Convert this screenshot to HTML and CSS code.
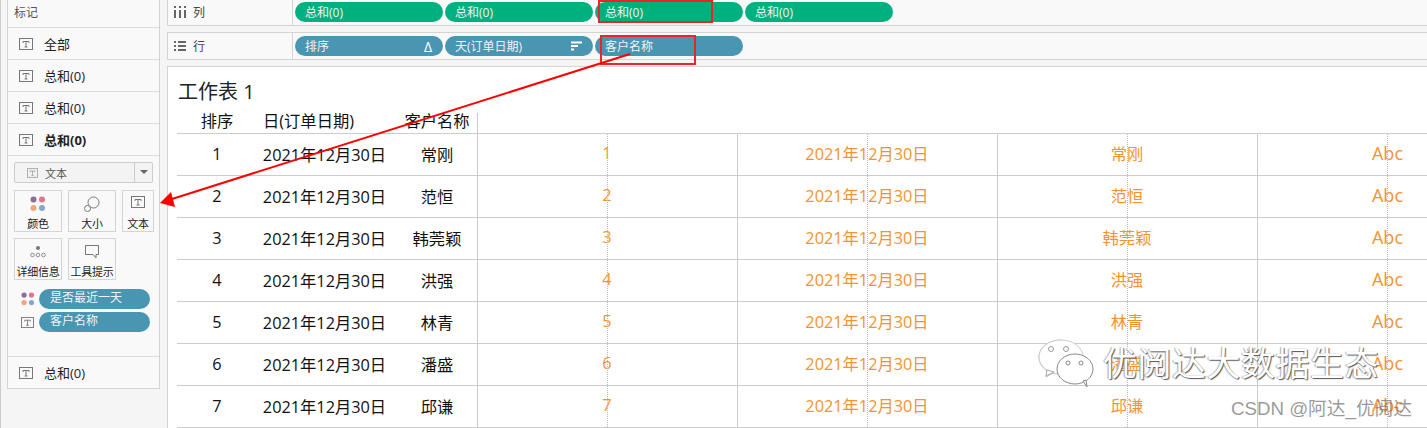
FILE: index.html
```html
<!DOCTYPE html>
<html lang="en">
<head>
    <meta charset="UTF-8">
    <title>工作表 1</title>
    <link rel="stylesheet" href="styles.css">
</head>
<body>
    <svg class="defs" width="0" height="0">
        <symbol id="t-icon" viewBox="0 0 14 12">
            <rect x="0.5" y="0.5" width="13" height="11" fill="none" stroke="#777"/>
            <path d="M4 3.5h6v1.5M4 3.5v1.5M7 3.5v5.5M5.5 9h3" fill="none" stroke="#777"/>
        </symbol>
        <symbol id="dots-icon" viewBox="0 0 16 16">
            <circle cx="3.5" cy="3.5" r="3" fill="#8a6f9b"/>
            <circle cx="12" cy="3.5" r="3" fill="#ea7288"/>
            <circle cx="3.5" cy="12" r="3" fill="#f3a67c"/>
            <circle cx="12" cy="12" r="3" fill="#86a6cc"/>
        </symbol>
    </svg>

    <aside class="marks">
        <div class="marks-title">标记</div>
        <div class="mark-row"><svg class="t"><use href="#t-icon"/></svg>全部</div>
        <div class="mark-row"><svg class="t"><use href="#t-icon"/></svg>总和(0)</div>
        <div class="mark-row"><svg class="t"><use href="#t-icon"/></svg>总和(0)</div>
        <div class="mark-row bold"><svg class="t"><use href="#t-icon"/></svg>总和(0)</div>
        <div class="mark-card">
            <div class="select">
                <span class="select-label"><svg class="t small"><use href="#t-icon"/></svg>文本</span>
                <span class="select-arrow"></span>
            </div>
            <div class="mark-btns">
                <div class="mark-btn">
                    <svg class="btn-icon" viewBox="0 0 16 16" width="16" height="16"><use href="#dots-icon"/></svg>
                    颜色
                </div>
                <div class="mark-btn">
                    <svg class="btn-icon" viewBox="0 0 16 16" width="16" height="16">
                        <circle cx="9.5" cy="6.5" r="5.5" fill="none" stroke="#777"/>
                        <circle cx="3.5" cy="12.5" r="3" fill="#f9f9f9" stroke="#777"/>
                    </svg>
                    大小
                </div>
                <div class="mark-btn narrow">
                    <svg class="t btn-icon"><use href="#t-icon"/></svg>
                    文本
                </div>
                <div class="mark-btn">
                    <svg class="btn-icon" viewBox="0 0 16 16" width="16" height="16">
                        <circle cx="8" cy="4" r="2" fill="#777"/>
                        <circle cx="2.5" cy="11" r="1.8" fill="none" stroke="#777" stroke-width="0.8"/>
                        <circle cx="8" cy="11" r="1.8" fill="none" stroke="#777" stroke-width="0.8"/>
                        <circle cx="13.5" cy="11" r="1.8" fill="none" stroke="#777" stroke-width="0.8"/>
                    </svg>
                    详细信息
                </div>
                <div class="mark-btn">
                    <svg class="btn-icon" viewBox="0 0 16 16" width="16" height="16">
                        <path d="M1.5 1.5h13v9h-2.5v3.5l-3-3.5h-7.5z" fill="none" stroke="#777"/>
                    </svg>
                    工具提示
                </div>
            </div>
            <div class="field-row">
                <svg class="dots"><use href="#dots-icon"/></svg>
                <span class="field">是否最近一天</span>
            </div>
            <div class="field-row">
                <svg class="t field-t"><use href="#t-icon"/></svg>
                <span class="field">客户名称</span>
            </div>
        </div>
        <div class="mark-row last"><svg class="t"><use href="#t-icon"/></svg>总和(0)</div>
    </aside>

    <main class="main">
        <div class="shelf shelf-cols">
            <div class="shelf-label">
                <svg class="shelf-icon" width="12" height="12" viewBox="0 0 12 12">
                    <path d="M1 0v2M1 4v8M6 0v2M6 4v8M11 0v2M11 4v8" stroke="#666" stroke-width="2"/>
                </svg>
                列
            </div>
            <div class="pills">
                <span class="pill green">总和(0)</span>
                <span class="pill green">总和(0)</span>
                <span class="pill green">总和(0)</span>
                <span class="pill green">总和(0)</span>
            </div>
        </div>
        <div class="shelf shelf-rows">
            <div class="shelf-label">
                <svg class="shelf-icon" width="12" height="12" viewBox="0 0 12 12">
                    <path d="M0 2h2M4 2h8M0 6h2M4 6h8M0 10h2M4 10h8" stroke="#666" stroke-width="2"/>
                </svg>
                行
            </div>
            <div class="pills">
                <span class="pill blue">排序<span class="delta">Δ</span></span>
                <span class="pill blue">天(订单日期)
                    <svg class="sort" width="11" height="10" viewBox="0 0 11 10">
                        <path d="M0 1.5h11M0 5h7M0 8.5h3" stroke="#fff" stroke-width="2"/>
                    </svg>
                </span>
                <span class="pill blue">客户名称</span>
            </div>
        </div>

        <section class="sheet">
            <h1 class="sheet-title">工作表 1</h1>
            <div class="grid">
                <div class="head">排序</div>
                <div class="head date-head">日(订单日期)</div>
                <div class="head name">客户名称</div>
                <div class="head last-head"></div>

                <div class="cell">1</div><div class="cell">2021年12月30日</div><div class="cell name">常刚</div>
                <div class="cell v">1</div><div class="cell v">2021年12月30日</div><div class="cell v">常刚</div><div class="cell v edge">Abc</div>

                <div class="cell">2</div><div class="cell">2021年12月30日</div><div class="cell name">范恒</div>
                <div class="cell v">2</div><div class="cell v">2021年12月30日</div><div class="cell v">范恒</div><div class="cell v edge">Abc</div>

                <div class="cell">3</div><div class="cell">2021年12月30日</div><div class="cell name">韩莞颖</div>
                <div class="cell v">3</div><div class="cell v">2021年12月30日</div><div class="cell v">韩莞颖</div><div class="cell v edge">Abc</div>

                <div class="cell">4</div><div class="cell">2021年12月30日</div><div class="cell name">洪强</div>
                <div class="cell v">4</div><div class="cell v">2021年12月30日</div><div class="cell v">洪强</div><div class="cell v edge">Abc</div>

                <div class="cell">5</div><div class="cell">2021年12月30日</div><div class="cell name">林青</div>
                <div class="cell v">5</div><div class="cell v">2021年12月30日</div><div class="cell v">林青</div><div class="cell v edge">Abc</div>

                <div class="cell">6</div><div class="cell">2021年12月30日</div><div class="cell name">潘盛</div>
                <div class="cell v">6</div><div class="cell v">2021年12月30日</div><div class="cell v">潘盛</div><div class="cell v edge">Abc</div>

                <div class="cell">7</div><div class="cell">2021年12月30日</div><div class="cell name">邱谦</div>
                <div class="cell v">7</div><div class="cell v">2021年12月30日</div><div class="cell v">邱谦</div><div class="cell v edge">Abc</div>
            </div>
        </section>
    </main>

    <!-- annotations drawn on top of the screenshot -->
    <svg class="notes" width="1427" height="428" viewBox="0 0 1427 428">
        <rect x="599" y="1" width="113" height="21" fill="none" stroke="#e8262a" stroke-width="2"/>
        <rect x="601" y="36" width="94" height="28" fill="none" stroke="#e8262a" stroke-width="2"/>
        <path d="M630 54L172 199" stroke="#f00" stroke-width="2" fill="none"/>
        <path d="M160 203L171 192L175 207z" fill="#f00"/>
    </svg>

    <div class="wechat">
        <svg width="58" height="50" viewBox="0 0 58 50">
            <path d="M24 2C12 2 2 9 2 19c0 6 3 10 8 14l-1 6 7-4c3 1 5 1 8 1" fill="#fff" stroke="#bbb"/>
            <ellipse cx="24" cy="19" rx="22" ry="17" fill="#fff" stroke="#ccc"/>
            <path d="M10 32l-1 6 8-4z" fill="#fff" stroke="#aaa"/>
            <circle cx="14" cy="11" r="2.5" fill="#fff" stroke="#999"/>
            <circle cx="29" cy="11" r="2.5" fill="#fff" stroke="#999"/>
            <ellipse cx="38" cy="31" rx="18" ry="15" fill="#fff" stroke="#888"/>
            <path d="M46 43l4 6-1-7z" fill="#fff" stroke="#888"/>
            <circle cx="31" cy="25" r="2" fill="#fff" stroke="#888"/>
            <circle cx="44" cy="25" r="2" fill="#fff" stroke="#888"/>
        </svg>
        <span class="wechat-name">优阅达大数据生态</span>
    </div>
    <div class="csdn">CSDN @阿达_优阅达</div>
</body>
</html>
```
FILE: styles.css
```css
* {
    box-sizing: border-box;
}

body {
    margin: 0;
    height: 100vh;
    display: flex;
    overflow: hidden;
    position: relative;
    font-family: "Open Sans", "Noto Sans CJK SC", sans-serif;
    font-size: 13px;
    color: #222;
    background: #f5f5f5;
    border-left: 1px solid #ccc;
}

.defs {
    position: absolute;
}

.t {
    width: 14px;
    height: 12px;
    flex: none;
}

/* marks card on the left */
.marks {
    width: 153px;
    height: 389px;
    margin-left: 6px;
    flex: none;
    background: #f9f9f9;
    border: 1px solid #d4d4d4;
    border-top: 0;
}

.marks-title {
    height: 28px;
    line-height: 26px;
    padding-left: 6px;
    font-size: 12px;
    color: #555;
    border-bottom: 1px solid #dcdcdc;
}

.mark-row {
    height: 32px;
    display: flex;
    align-items: center;
    gap: 11px;
    padding: 0 0 0 11px;
    border-bottom: 1px solid #dcdcdc;
}

.mark-row.bold {
    font-weight: 700;
}

.mark-row.last {
    border-bottom: 0;
    border-top: 1px solid #dcdcdc;
}

.mark-card {
    height: 200px;
    padding: 6px 6px 0 6px;
}

.select {
    height: 21px;
    display: flex;
    justify-content: space-between;
    border: 1px solid #ccc;
    border-radius: 2px;
    background: #f3f3f3;
    font-size: 11px;
    color: #555;
}

.select-label {
    display: flex;
    align-items: center;
    gap: 7px;
    padding-left: 12px;
}

.t.small {
    width: 11px;
    height: 10px;
    opacity: 0.7;
}

.select-arrow {
    width: 18px;
    border-left: 1px solid #ccc;
    position: relative;
}

.select-arrow::after {
    content: "";
    position: absolute;
    left: 5px;
    top: 7px;
    border: 4px solid transparent;
    border-top: 4px solid #666;
}

.mark-btns {
    display: grid;
    grid-template-columns: 48px 48px 32px;
    grid-auto-rows: 42px;
    column-gap: 6px;
    row-gap: 6px;
    margin-top: 7px;
}

.mark-btn {
    display: flex;
    flex-direction: column;
    align-items: center;
    justify-content: space-between;
    padding: 5px 0 0 0;
    border: 1px solid #d4d4d4;
    font-size: 11px;
    line-height: 15px;
    white-space: nowrap;
    letter-spacing: -0.2px;
}

.btn-icon {
    flex: none;
}

.field-row {
    display: flex;
    align-items: center;
    gap: 5px;
    height: 20px;
    margin: 0 3px 3px 7px;
}

.mark-btns + .field-row {
    margin-top: 9px;
}

.dots {
    width: 14px;
    height: 14px;
    flex: none;
    margin-right: -1px;
}

.field-t {
    width: 13px;
    height: 11px;
}

.field {
    flex: 1;
    height: 20px;
    line-height: 18px;
    padding-left: 11px;
    border-radius: 10px;
    background: #4996b2;
    color: #f2f2f2;
    font-size: 12px;
}

/* shelves and sheet */
.main {
    flex: 1;
    margin-left: 7px;
    min-width: 0;
}

.shelf {
    display: flex;
    background: #f9f9f9;
    border: 1px solid #d4d4d4;
    border-right: 0;
}

.shelf-cols {
    height: 26px;
    border-top: 0;
}

.shelf-rows {
    height: 28px;
    margin-top: 6px;
}

.shelf-label {
    width: 125px;
    display: flex;
    align-items: center;
    gap: 7px;
    padding: 0 0 2px 6px;
    font-size: 12px;
    color: #444;
    border-right: 1px solid #d4d4d4;
}

.shelf-rows .shelf-label {
    padding-bottom: 0;
}

.pills {
    display: flex;
    gap: 2px;
    padding: 2px 0 0 2px;
}

.shelf-rows .pills {
    padding-top: 3px;
}

.pill {
    width: 148px;
    height: 20px;
    display: flex;
    align-items: center;
    justify-content: space-between;
    padding: 0 11px 0 10px;
    border-radius: 10px;
    color: #f2f2f2;
    font-size: 12px;
}

.pill.green {
    background: #00b180;
}

.pill.blue {
    background: #4996b2;
}

.delta {
    font-size: 14px;
    color: #fff;
}

.sheet {
    height: 362px;
    margin-top: 6px;
    padding: 11px 0 0 9px;
    background: #fff;
    border-top: 1px solid #d4d4d4;
    border-left: 1px solid #d4d4d4;
    overflow: hidden;
}

.sheet-title {
    margin: 0 0 0 1px;
    height: 35px;
    line-height: 27px;
    font-size: 20px;
    font-weight: 400;
    color: #222;
}

.grid {
    display: grid;
    grid-template-columns: 80px 135px 85px repeat(3, 260px) 170px;
    grid-template-rows: 21px repeat(7, 42px);
    font-size: 16.3px;
    color: #111;
}

.head {
    text-align: center;
    line-height: 17px;
    border-bottom: 1px solid #ccc;
}

.date-head {
    text-align: left;
    padding-left: 6px;
}

.last-head {
    grid-column: 4 / -1;
    border-left: 1px solid #ccc;
}

.cell {
    display: flex;
    align-items: center;
    justify-content: center;
    padding-bottom: 2px;
    border-bottom: 1px solid #ccc;
    white-space: nowrap;
}

.name {
    padding-left: 5px;
}

/* orange value cells, dotted line runs down the centre */
.cell.v {
    position: relative;
    color: #f59331;
    border-left: 1px solid #ccc;
    padding-bottom: 4px;
    padding-right: 1px;
}

.cell.v::before {
    content: "";
    position: absolute;
    left: 129px;
    top: 0;
    bottom: 0;
    border-left: 1px dotted #bbb;
}

.cell.edge {
    padding-left: 90px;
    padding-right: 0;
    font-size: 18px;
}

.notes {
    position: absolute;
    left: -1px;
    top: 0;
}

.wechat {
    position: absolute;
    left: 1036px;
    top: 338px;
    display: flex;
    align-items: center;
    gap: 8px;
}

.wechat-name {
    font-size: 34px;
    line-height: 50px;
    color: #fff;
    letter-spacing: 0.5px;
    text-shadow: 1px 1px 1px #555, -1px 0 1px #aaa;
}

.csdn {
    position: absolute;
    left: 1230px;
    top: 397px;
    font-family: "Liberation Sans", "Noto Sans CJK SC", sans-serif;
    font-size: 18.7px;
    line-height: 24px;
    color: rgba(120, 120, 120, 0.75);
}
```
